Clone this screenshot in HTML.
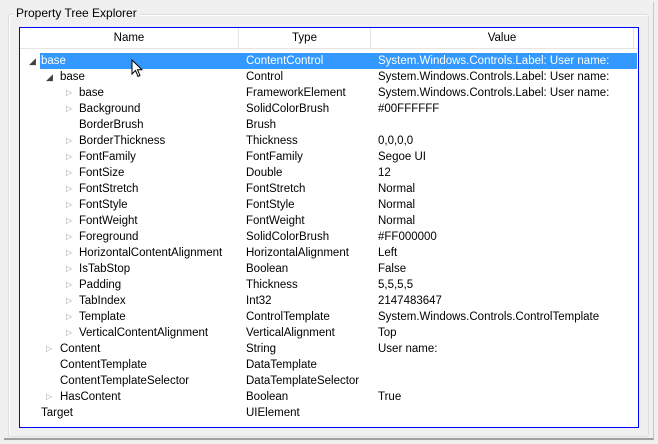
<!DOCTYPE html>
<html><head><meta charset="utf-8"><style>
*{margin:0;padding:0;box-sizing:border-box}
body{width:658px;height:444px;background:#f0f0f0;position:relative;overflow:hidden;font-family:"Segoe UI","Liberation Sans",sans-serif;font-size:11.5px;color:#000}
.outer{position:absolute;left:4px;top:2px;width:650px;height:438px;border-right:1px solid #c8c8c8;border-bottom:2px solid #a0a0a0}
.gb{position:absolute;left:8px;top:14px;width:641px;height:423px;border:1px solid #d5dfe5;border-radius:3px;box-shadow:inset 1px 1px 0 #fff}
.gbt{position:absolute;left:13px;top:6px;background:#f0f0f0;padding:0 3px;font-size:12px;color:#000}
.lv{position:absolute;left:19px;top:27px;width:620px;height:401px;border:1px solid #0000ff;background:#fff}
.hdr{position:absolute;left:0;top:0;width:618px;height:21px;background:#fff;border-bottom:1px solid #e5e5e5}
.hc{position:absolute;top:0;height:20px;line-height:20px;text-align:center;border-right:1px solid #e5e5e5}
.row{position:absolute;left:0;width:618px;height:16px;line-height:16px;white-space:nowrap}
.row span{position:absolute;top:0}
.sel{position:absolute;left:20px;width:597px;height:16px;background:#3399ff}
.ar{position:absolute;top:0;font-size:8px;color:#a0a0a0}
.ex{color:#404040;font-size:9px}
</style></head><body>
<div class="outer"></div>
<div class="gb"></div>
<div class="gbt">Property Tree Explorer</div>
<div class="lv">
<div class="hdr">
<div class="hc" style="left:0;width:219px">Name</div>
<div class="hc" style="left:219px;width:132px">Type</div>
<div class="hc" style="left:351px;width:263px">Value</div>
</div>
<div class="sel" style="top:25px"></div>
<div id="rows"></div>
</div>
<svg style="position:absolute;left:131px;top:59px" width="14" height="20" viewBox="0 0 14 20"><path d="M1 1 L1 15 L4.5 11.5 L7 17.5 L9 16.5 L6.5 10.8 L11 10.8 Z" fill="#fff" stroke="#000" stroke-width="1"/></svg>
<script>
var d=[
[0,'e','base','ContentControl','System.Windows.Controls.Label: User name:'],
[1,'e','base','Control','System.Windows.Controls.Label: User name:'],
[2,'c','base','FrameworkElement','System.Windows.Controls.Label: User name:'],
[2,'c','Background','SolidColorBrush','#00FFFFFF'],
[2,'','BorderBrush','Brush',''],
[2,'c','BorderThickness','Thickness','0,0,0,0'],
[2,'c','FontFamily','FontFamily','Segoe UI'],
[2,'c','FontSize','Double','12'],
[2,'c','FontStretch','FontStretch','Normal'],
[2,'c','FontStyle','FontStyle','Normal'],
[2,'c','FontWeight','FontWeight','Normal'],
[2,'c','Foreground','SolidColorBrush','#FF000000'],
[2,'c','HorizontalContentAlignment','HorizontalAlignment','Left'],
[2,'c','IsTabStop','Boolean','False'],
[2,'c','Padding','Thickness','5,5,5,5'],
[2,'c','TabIndex','Int32','2147483647'],
[2,'c','Template','ControlTemplate','System.Windows.Controls.ControlTemplate'],
[2,'c','VerticalContentAlignment','VerticalAlignment','Top'],
[1,'c','Content','String','User name:'],
[1,'','ContentTemplate','DataTemplate',''],
[1,'','ContentTemplateSelector','DataTemplateSelector',''],
[1,'c','HasContent','Boolean','True'],
[0,'','Target','UIElement','']];
var tx=[21,40,59],ax=[9,26,46],h='';
d.forEach(function(r,i){var top=25+i*16,s=i==0?'color:#fff;':'';
h+='<div class="row" style="top:'+top+'px;'+s+'">';
if(r[1]=='e')h+='<span class="ar ex" style="left:'+ax[r[0]]+'px">&#9698;</span>';
if(r[1]=='c')h+='<span class="ar" style="left:'+ax[r[0]]+'px">&#9655;</span>';
h+='<span style="left:'+tx[r[0]]+'px">'+r[2]+'</span><span style="left:226px">'+r[3]+'</span><span style="left:358px">'+r[4]+'</span></div>';});
document.getElementById('rows').innerHTML=h;
</script>
</body></html>
